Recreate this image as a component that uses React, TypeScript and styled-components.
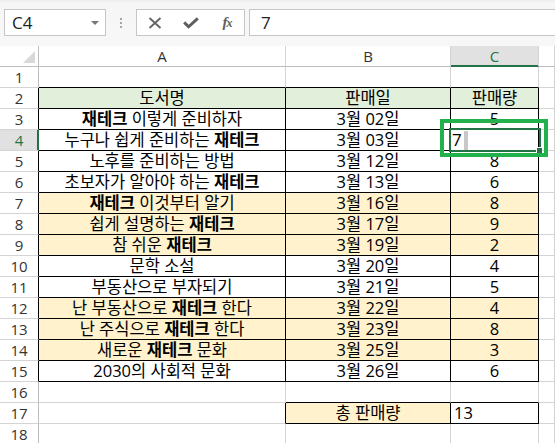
import React from 'react';
import styled, { createGlobalStyle } from 'styled-components';

const FONT = `"Open Sans", "Noto Sans CJK KR", sans-serif`;
const GRID = '#d4d4d4';
const HEAD_LINE = '#bdbdbd';
const BLACK = '#000';
const XL_GREEN = '#217346';
const GREEN_FILL = '#e2efda';
const ORANGE_FILL = '#fff2cc';

const Global = createGlobalStyle`
  html, body { margin: 0; padding: 0; background: #fff; }
  body { font-family: ${FONT}; }
`;

const Page = styled.div`
  position: relative;
  width: 555px;
  height: 443px;
  overflow: hidden;
  background: #fff;
  display: flex;
  flex-direction: column;
`;

const FormulaBar = styled.div`
  flex: none;
  height: 46px;
  box-sizing: border-box;
  padding: 9px 0 0 4px;
  background: linear-gradient(#ebebeb 0, #f6f6f6 3px, #f7f7f7 100%);
  display: flex;
  align-items: flex-start;
`;

const NameBox = styled.div`
  width: 102px;
  height: 27px;
  box-sizing: border-box;
  border: 1px solid #c6c6c6;
  background: #fff;
  display: flex;
  align-items: center;
  justify-content: space-between;
  padding: 0 6px 0 7px;
  font: 17px/25px ${FONT};
  color: #222;
`;

const Caret = styled.span`
  width: 0;
  height: 0;
  border-left: 4px solid transparent;
  border-right: 4px solid transparent;
  border-top: 4px solid #777;
`;

const Grip = styled.div`
  width: 30px;
  height: 27px;
  display: flex;
  flex-direction: column;
  align-items: center;
  justify-content: center;
  gap: 2px;
`;

const Dot = styled.span`
  width: 2px;
  height: 2px;
  background: #a6a6a6;
`;

const FxButtons = styled.div`
  width: 109px;
  height: 27px;
  box-sizing: border-box;
  border: 1px solid #c6c6c6;
  background: #fff;
  display: grid;
  grid-template-columns: 36px 36px 36px;
  align-items: center;
  justify-items: center;
`;

const Fx = styled.span`
  font: italic bold 15px/1 "Liberation Serif", serif;
  color: #5e5e5e;
  letter-spacing: -1px;
  small { font-size: 12px; }
`;

const FormulaInput = styled.div`
  flex: 1;
  margin-left: 4px;
  margin-right: -10px;
  height: 27px;
  box-sizing: border-box;
  border: 1px solid #c6c6c6;
  background: #fff;
  padding-left: 11px;
  font: 17px/25px ${FONT};
  color: #222;
`;

const Sheet = styled.div`
  display: grid;
  grid-template-columns: 39px 247px 165px 88px 1fr;
  grid-auto-rows: 21px;
`;

const Corner = styled.div`
  box-sizing: border-box;
  border-right: 1px solid ${HEAD_LINE};
  border-bottom: 1px solid ${HEAD_LINE};
  background: #fff;
  display: flex;
  justify-content: flex-end;
  align-items: flex-end;
  padding: 0 3px 3px 0;
`;

const Triangle = styled.span`
  width: 0;
  height: 0;
  border-left: 12px solid transparent;
  border-bottom: 12px solid #d9d9d9;
`;

const ColHeader = styled.div<{ $sel?: boolean }>`
  box-sizing: border-box;
  border-right: 1px solid ${GRID};
  border-bottom: 1px solid ${(p) => (p.$sel ? XL_GREEN : HEAD_LINE)};
  background: ${(p) => (p.$sel ? '#e1e1e1' : '#fff')};
  box-shadow: ${(p) => (p.$sel ? `inset 0 -1px 0 ${XL_GREEN}` : 'none')};
  color: ${(p) => (p.$sel ? XL_GREEN : '#333')};
  display: flex;
  align-items: center;
  justify-content: center;
  font: 15px/20px ${FONT};
`;

const RowHeader = styled.div<{ $sel?: boolean; $r: string }>`
  box-sizing: border-box;
  border-right: 1px solid ${(p) => p.$r};
  border-bottom: 1px solid ${GRID};
  background: ${(p) => (p.$sel ? '#e1e1e1' : '#fff')};
  box-shadow: ${(p) => (p.$sel ? `inset -1px 0 0 ${XL_GREEN}` : 'none')};
  color: ${(p) => (p.$sel ? XL_GREEN : '#333')};
  display: flex;
  align-items: center;
  justify-content: center;
  font: 15px/20px ${FONT};
`;

const Cell = styled.div<{ $fill: string; $r: string; $b: string; $left?: boolean }>`
  box-sizing: border-box;
  border-right: 1px solid ${(p) => p.$r};
  border-bottom: 1px solid ${(p) => p.$b};
  background: ${(p) => p.$fill};
  display: flex;
  align-items: center;
  justify-content: ${(p) => (p.$left ? 'flex-start' : 'center')};
  padding: ${(p) => (p.$left ? '0 0 0 3px' : '0 2px')};
  font: 16.5px/20px ${FONT};
  color: #000;
  white-space: nowrap;
`;

const EditCell = styled.div<{ $r: string; $b: string }>`
  position: relative;
  box-sizing: border-box;
  border-right: 1px solid ${(p) => p.$r};
  border-bottom: 1px solid ${(p) => p.$b};
  background: #fff;
  display: flex;
  align-items: center;
  padding-left: 1px;
  font: 17px/20px ${FONT};
  color: #000;
`;

const TextCaret = styled.span`
  width: 4px;
  height: 19px;
  margin-left: 2px;
  background: #c8c8c8;
`;

const Selection = styled.div`
  position: absolute;
  left: -2px;
  top: -2px;
  width: 92px;
  height: 24px;
  box-sizing: border-box;
  border: 2px solid ${XL_GREEN};
  z-index: 2;
  pointer-events: none;
`;

const FillHandle = styled.span`
  position: absolute;
  right: -3px;
  bottom: -3px;
  width: 6px;
  height: 6px;
  box-sizing: border-box;
  background: ${XL_GREEN};
  border-top: 1px solid #fff;
  border-left: 1px solid #fff;
`;

const Highlight = styled.div`
  position: absolute;
  left: 440px;
  top: 119px;
  width: 108px;
  height: 38px;
  box-sizing: border-box;
  border: 4px solid #22b14c;
  z-index: 3;
  pointer-events: none;
`;

const B = styled.b`
  font-weight: 700;
`;

const Sp = styled.span`
  white-space: pre;
`;

const XIcon = () => (
  <svg width="14" height="12" viewBox="0 0 14 12">
    <path d="M1.5 1 L12.5 11 M12.5 1 L1.5 11" stroke="#666" strokeWidth="1.9" fill="none" />
  </svg>
);

const CheckIcon = () => (
  <svg width="16" height="12" viewBox="0 0 16 12">
    <path d="M1.2 5.4 L5.6 9.8 L14.8 1.4" stroke="#5e5e5e" strokeWidth="3" fill="none" />
  </svg>
);

type RowData = { a?: React.ReactNode; b?: string; c?: string; fill?: string };

const tech = <B>재테크</B>;

const rows: Record<number, RowData> = {
  2: { a: '도서명', b: '판매일', c: '판매량', fill: GREEN_FILL },
  3: { a: <>{tech}<Sp> </Sp>이렇게 준비하자</>, b: '3월 02일', c: '5' },
  4: { a: <>누구나 쉽게 준비하는<Sp> </Sp>{tech}</>, b: '3월 03일' },
  5: { a: '노후를 준비하는 방법', b: '3월 12일', c: '8' },
  6: { a: <>초보자가 알아야 하는<Sp> </Sp>{tech}</>, b: '3월 13일', c: '6' },
  7: { a: <>{tech}<Sp> </Sp>이것부터 알기</>, b: '3월 16일', c: '8', fill: ORANGE_FILL },
  8: { a: <>쉽게 설명하는<Sp> </Sp>{tech}</>, b: '3월 17일', c: '9', fill: ORANGE_FILL },
  9: { a: <>참 쉬운<Sp> </Sp>{tech}</>, b: '3월 19일', c: '2', fill: ORANGE_FILL },
  10: { a: '문학 소설', b: '3월 20일', c: '4' },
  11: { a: '부동산으로 부자되기', b: '3월 21일', c: '5' },
  12: { a: <>난 부동산으로<Sp> </Sp>{tech}<Sp> </Sp>한다</>, b: '3월 22일', c: '4', fill: ORANGE_FILL },
  13: { a: <>난 주식으로<Sp> </Sp>{tech}<Sp> </Sp>한다</>, b: '3월 23일', c: '8', fill: ORANGE_FILL },
  14: { a: <>새로운<Sp> </Sp>{tech}<Sp> </Sp>문화</>, b: '3월 25일', c: '3', fill: ORANGE_FILL },
  15: { a: '2030의 사회적 문화', b: '3월 26일', c: '6' },
};

const rightColor = (r: number, col: number) => {
  if (r >= 2 && r <= 15 && col <= 2) return BLACK;
  if (r === 17 && col <= 2) return BLACK;
  return GRID;
};

const bottomColor = (r: number, col: number) => {
  if (r >= 1 && r <= 15 && col <= 2) return BLACK;
  if ((r === 16 || r === 17) && (col === 1 || col === 2)) return BLACK;
  return GRID;
};

const fillFor = (r: number, col: number) => {
  const d = rows[r];
  if (d && d.fill && col <= 2) return d.fill;
  if (r === 17 && col === 1) return ORANGE_FILL;
  return '#fff';
};

const contentFor = (r: number, col: number): React.ReactNode => {
  if (r === 17) {
    if (col === 1) return '총 판매량';
    if (col === 2) return '13';
    return null;
  }
  const d = rows[r];
  if (!d) return null;
  if (col === 0) return d.a;
  if (col === 1) return d.b;
  if (col === 2) return d.c;
  return null;
};

export default function App() {
  const rowNums = Array.from({ length: 18 }, (_, i) => i + 1);
  return (
    <Page>
      <Global />
      <FormulaBar>
        <NameBox>
          <span>C4</span>
          <Caret />
        </NameBox>
        <Grip>
          <Dot />
          <Dot />
          <Dot />
        </Grip>
        <FxButtons>
          <XIcon />
          <CheckIcon />
          <Fx>
            f<small>x</small>
          </Fx>
        </FxButtons>
        <FormulaInput>7</FormulaInput>
      </FormulaBar>
      <Sheet>
        <Corner>
          <Triangle />
        </Corner>
        <ColHeader>A</ColHeader>
        <ColHeader>B</ColHeader>
        <ColHeader $sel>C</ColHeader>
        <ColHeader />
        {rowNums.map((r) => (
          <React.Fragment key={r}>
            <RowHeader
              $sel={r === 4}
              $r={r === 4 ? XL_GREEN : r >= 2 && r <= 15 ? BLACK : HEAD_LINE}
            >
              {r}
            </RowHeader>
            {[0, 1, 2, 3].map((col) =>
              r === 4 && col === 2 ? (
                <EditCell key={col} $r={rightColor(r, col)} $b={bottomColor(r, col)}>
                  7
                  <TextCaret />
                  <Selection>
                    <FillHandle />
                  </Selection>
                </EditCell>
              ) : (
                <Cell
                  key={col}
                  $fill={fillFor(r, col)}
                  $r={rightColor(r, col)}
                  $b={bottomColor(r, col)}
                  $left={r === 17 && col === 2}
                >
                  {contentFor(r, col)}
                </Cell>
              )
            )}
          </React.Fragment>
        ))}
      </Sheet>
      <Highlight />
    </Page>
  );
}
